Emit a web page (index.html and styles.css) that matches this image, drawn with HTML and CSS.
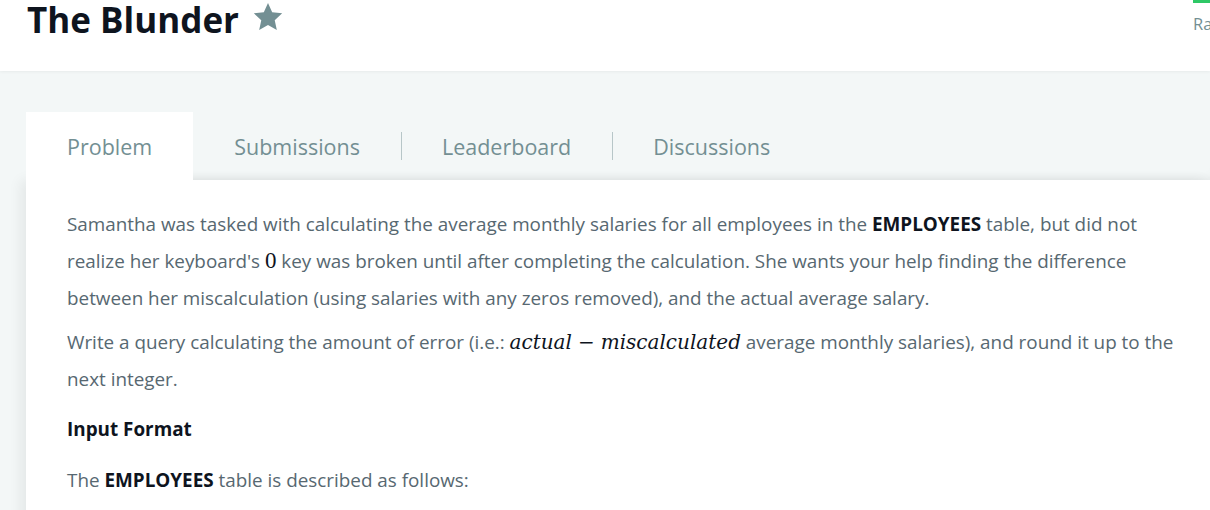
FILE: index.html
```html
<!DOCTYPE html>
<html>
<head>
<meta charset="utf-8">
<link rel="stylesheet" href="styles.css">
</head>
<body>
<header class="top">
  <div class="title-row">
    <h1 class="title">The Blunder</h1>
    <svg class="star" viewBox="0 0 24 24" width="34" height="34"><path d="M12 2.2l2.95 6.45 7.05.78-5.25 4.78 1.47 6.94L12 17.6l-6.22 3.55 1.47-6.94L2 9.43l7.05-.78z" fill="#738f93"/></svg>
  </div>
  <div class="side">
    <div class="green"></div>
    <div class="rank">Ra</div>
  </div>
</header>
<main class="main">
  <nav class="tabs">
    <div class="tab active">Problem</div>
    <div class="tab">Submissions</div>
    <div class="tab sep">Leaderboard</div>
    <div class="tab sep">Discussions</div>
  </nav>
  <section class="card">
    <p class="para">Samantha was tasked with calculating the average monthly salaries for all employees in the <b>EMPLOYEES</b> table, but did not realize her keyboard's <span class="mn">0</span> key was broken until after completing the calculation. She wants your help finding the difference between her miscalculation (using salaries with any zeros removed), and the actual average salary.</p>
    <p class="para">Write a query calculating the amount of error (i.e.: <span class="mi">actual</span><span class="mo">−</span><span class="mi">miscalculated</span> average monthly salaries), and round it up to the next integer.</p>
    <h3 class="heading">Input Format</h3>
    <p class="para">The <b>EMPLOYEES</b> table is described as follows:</p>
  </section>
</main>
</body>
</html>
```
FILE: styles.css
```css
html, body {
  margin: 0;
  padding: 0;
  background: #f3f7f7;
  font-family: "Open Sans", "Liberation Sans", sans-serif;
  overflow: hidden;
}
.top {
  height: 71px;
  background: #fff;
  display: flex;
  justify-content: space-between;
  box-shadow: 0 1px 3px rgba(0, 0, 0, 0.05);
  position: relative;
}
.title-row {
  display: flex;
  align-items: flex-start;
  padding-left: 27px;
}
.title {
  margin: 0;
  font-size: 35px;
  font-weight: 700;
  color: #0e141e;
  line-height: 40px;
}
.star {
  margin-left: 12px;
  margin-top: 0;
}
.side {
  width: 17px;
  overflow: hidden;
}
.green {
  height: 3px;
  width: 17px;
  background: #2ec866;
}
.rank {
  margin-top: 9px;
  font-size: 16.5px;
  color: #738f93;
  white-space: nowrap;
}
.main {
  padding: 41px 0 0 26px;
}
.tabs {
  display: flex;
  height: 68px;
  align-items: center;
  box-shadow: inset 0 -8px 8px -6px rgba(0, 0, 0, 0.06);
  position: relative;
}
.tab {
  height: 68px;
  display: flex;
  align-items: center;
  padding: 0 41px;
  font-size: 21.5px;
  color: #738f93;
  position: relative;
}
.tab.sep::before {
  content: "";
  position: absolute;
  left: 0;
  top: 20px;
  height: 28px;
  width: 1px;
  background: #b7c6c8;
}
.tab.active {
  background: #fff;
  z-index: 2;
}
.card {
  background: #fff;
  padding: 26px 20px 20px 41px;
  min-height: 400px;
  box-shadow: -6px 0 12px rgba(0, 0, 0, 0.06);
  color: #576871;
  font-size: 18.86px;
  line-height: 37px;
}
.para {
  margin: 0 0 7px 0;
}
.para b, .heading {
  color: #0e141e;
  font-weight: 700;
}
.heading {
  font-size: 18.86px;
  margin: 13px 0 14px 0;
  line-height: 37px;
}
.mn {
  font-family: "Liberation Serif", "DejaVu Serif", serif;
  font-size: 23px;
  line-height: 1;
  color: #0e141e;
}
.mi {
  font-family: "DejaVu Serif", "Liberation Serif", serif;
  font-style: italic;
  font-size: 20px;
  line-height: 1;
  color: #0e141e;
}
.mo {
  font-family: "DejaVu Serif", serif;
  font-size: 20px;
  line-height: 1;
  color: #0e141e;
  margin: 0 6px;
}
```
